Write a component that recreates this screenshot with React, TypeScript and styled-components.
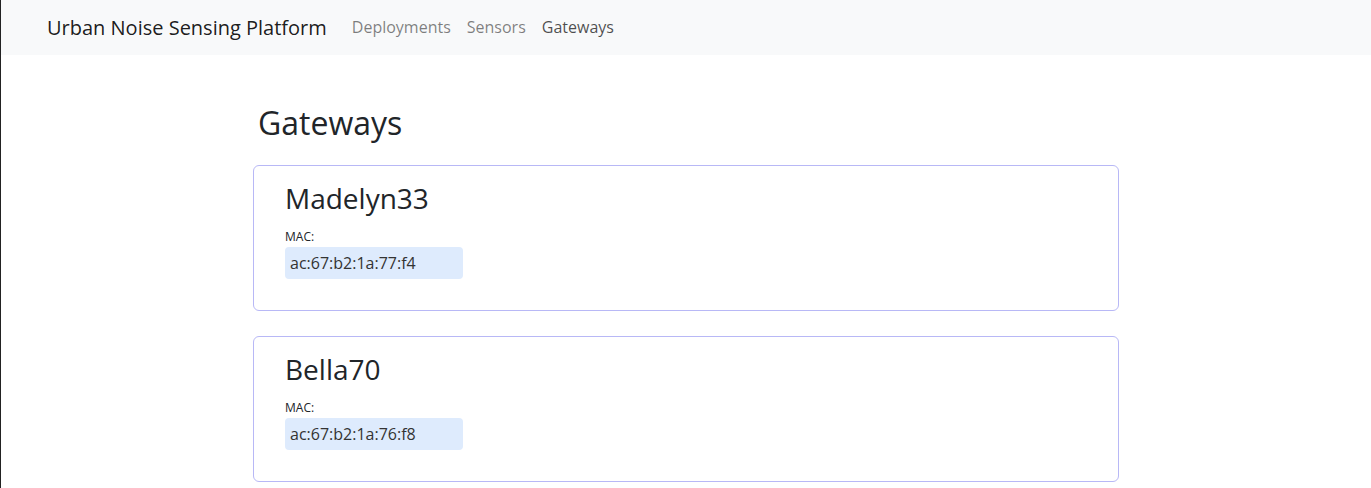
import React from "react";
import styled, { createGlobalStyle } from "styled-components";

const Global = createGlobalStyle`
  html, body { margin: 0; padding: 0; background: #fff; }
  body {
    font-family: "Open Sans", "Noto Sans", sans-serif;
    color: #212529;
    border-left: 1px solid #222;
    min-height: 488px;
    box-sizing: border-box;
  }
`;

const Navbar = styled.nav`
  height: 55px;
  background: #f8f9fa;
  display: flex;
  align-items: center;
  padding-left: 46px;
  padding-bottom: 1px;
  box-sizing: border-box;
`;

const Brand = styled.a`
  font-size: 20px;
  color: rgba(0, 0, 0, 0.9);
  margin-right: 17px;
  text-decoration: none;
`;

const NavLinks = styled.div`
  display: flex;
`;

const NavLink = styled.a<{ $active?: boolean }>`
  font-size: 16px;
  padding: 0 8px;
  color: ${(p) => (p.$active ? "rgba(0,0,0,0.7)" : "rgba(0,0,0,0.5)")};
  text-decoration: none;
`;

const Main = styled.main`
  width: 866px;
  margin: 0 auto;
  padding-top: 49px;
`;

const PageTitle = styled.h2`
  font-size: 32px;
  font-weight: 400;
  margin: 0 0 23px 5px;
  line-height: 1.2;
`;

const CardList = styled.div`
  display: flex;
  flex-direction: column;
  gap: 25px;
`;

const Card = styled.div`
  border: 1px solid #b8b8f6;
  border-radius: 6px;
  height: 146px;
  box-sizing: border-box;
  padding: 16px 32px 15px 31px;
`;

const CardTitle = styled.h3`
  font-size: 28px;
  font-weight: 400;
  margin: 0 0 13px 0;
  line-height: 1.2;
`;

const Label = styled.div`
  font-size: 12px;
  line-height: 15px;
  margin-bottom: 3px;
`;

const MacBox = styled.div`
  width: 178px;
  height: 32px;
  box-sizing: border-box;
  background: #deebfd;
  border-radius: 4px;
  padding-left: 5px;
  font-size: 16px;
  line-height: 32px;
  color: #333;
`;

const gateways = [
  { name: "Madelyn33", mac: "ac:67:b2:1a:77:f4" },
  { name: "Bella70", mac: "ac:67:b2:1a:76:f8" },
];

export default function App() {
  return (
    <>
      <Global />
      <Navbar>
        <Brand>Urban Noise Sensing Platform</Brand>
        <NavLinks>
          <NavLink>Deployments</NavLink>
          <NavLink>Sensors</NavLink>
          <NavLink $active>Gateways</NavLink>
        </NavLinks>
      </Navbar>
      <Main>
        <PageTitle>Gateways</PageTitle>
        <CardList>
          {gateways.map((g) => (
            <Card key={g.name}>
              <CardTitle>{g.name}</CardTitle>
              <Label>MAC:</Label>
              <MacBox>{g.mac}</MacBox>
            </Card>
          ))}
        </CardList>
      </Main>
    </>
  );
}
